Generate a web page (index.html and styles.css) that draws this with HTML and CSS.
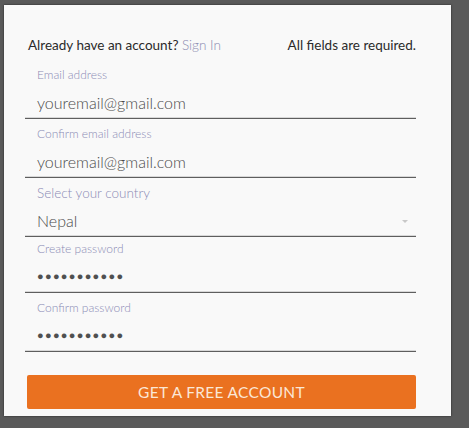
FILE: index.html
```html
<!DOCTYPE html>
<html>
<head>
<meta charset="utf-8">
<link rel="stylesheet" href="styles.css">
</head>
<body>
<div class="card">
  <div class="head">
    <span>Already have an account? <a class="link">Sign In</a></span>
    <span>All fields are required.</span>
  </div>
  <div class="field">
    <div class="label">Email address</div>
    <div class="value">youremail@gmail.com</div>
  </div>
  <div class="field">
    <div class="label">Confirm email address</div>
    <div class="value">youremail@gmail.com</div>
  </div>
  <div class="field field-select">
    <div class="label label-big">Select your country</div>
    <div class="value value-row"><span>Nepal</span><span class="caret"></span></div>
  </div>
  <div class="field field-tight">
    <div class="label">Create password</div>
    <div class="value dots">●●●●●●●●●●●</div>
  </div>
  <div class="field">
    <div class="label">Confirm password</div>
    <div class="value dots">●●●●●●●●●●●</div>
  </div>
  <button class="btn">GET A FREE ACCOUNT</button>
</div>
</body>
</html>
```
FILE: styles.css
```css
html, body {
  margin: 0;
  padding: 0;
}
body {
  background: #5a5a5a;
  width: 469px;
  height: 428px;
  overflow: hidden;
  font-family: Lato, "Liberation Sans", sans-serif;
}
.card {
  margin: 5px 0 0 4px;
  width: 447px;
  height: 411px;
  box-sizing: border-box;
  background: #f9f9f9;
  padding: 31px 35px 6px 21px;
  box-shadow: 0 0 2px rgba(0,0,0,0.6);
}
.head {
  display: flex;
  justify-content: space-between;
  padding-left: 3px;
  font-size: 13.5px;
  line-height: 18px;
  color: #2a2a2a;
  margin-bottom: 6px;
}
.link {
  color: #8a8ab0;
  font-weight: 300;
}
.field {
  padding: 7px 0 3px 12px;
  border-bottom: 1px solid #5e5e5e;
  box-shadow: 0 -1px 0 #d8d8d8 inset;
}
.field-tight {
  padding-top: 4px;
}
.label {
  font-size: 12px;
  line-height: 16px;
  color: #8b8bb5;
  font-weight: 300;
}
.label-big {
  font-size: 13.5px;
}
.value {
  margin-top: 8px;
  font-size: 16px;
  line-height: 24px;
  color: #4a4a4a;
  font-weight: 300;
}
.value-row {
  display: flex;
  justify-content: space-between;
  align-items: center;
}
.caret {
  width: 0;
  height: 0;
  border-left: 3px solid transparent;
  border-right: 3px solid transparent;
  border-top: 3px solid #c8c8c8;
  margin-right: 8px;
}
.dots {
  font-size: 11px;
  letter-spacing: 1.3px;
  color: #505050;
  font-family: "DejaVu Sans", sans-serif;
}
.btn {
  display: block;
  margin: 23px 0 0 2px;
  width: 389px;
  height: 34px;
  border: none;
  border-radius: 2px;
  background: #ea7120;
  color: #fbe7d6;
  font-family: Lato, "Liberation Sans", sans-serif;
  font-size: 15.5px;
  letter-spacing: 0.3px;
  padding: 0;
}
```
